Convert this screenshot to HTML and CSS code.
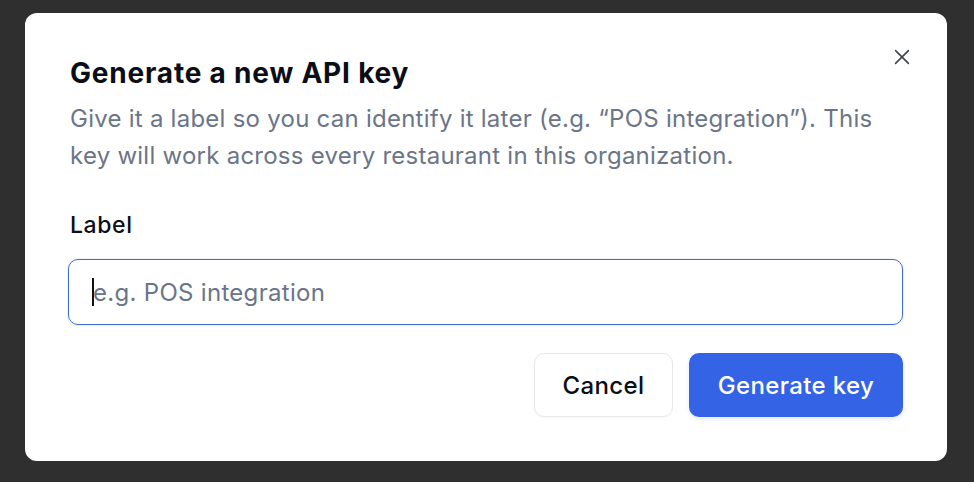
FILE: index.html
```html
<!DOCTYPE html>
<html lang="en">
<head>
<meta charset="utf-8">
<title>Generate a new API key</title>
<link rel="stylesheet" href="styles.css">
</head>
<body>
<div class="backdrop">
  <div class="dialog" role="dialog" aria-labelledby="dlg-title">
    <button class="close" aria-label="Close">
      <svg viewBox="0 0 24 24" width="22" height="22" fill="none" stroke="currentColor" stroke-width="1.7" stroke-linecap="round"><path d="M5 5L19 19M19 5L5 19"/></svg>
    </button>
    <h2 class="title" id="dlg-title">Generate a new API key</h2>
    <p class="desc">Give it a label so you can identify it later (e.g. “POS integration”). This key will work across every restaurant in this organization.</p>
    <label class="field-label" for="label">Label</label>
    <div class="input"><span class="caret"></span><span class="placeholder">e.g. POS integration</span></div>
    <div class="actions">
      <button class="btn btn-secondary">Cancel</button>
      <button class="btn btn-primary">Generate key</button>
    </div>
  </div>
</div>
</body>
</html>
```
FILE: styles.css
```css
* { box-sizing: border-box; }
html, body { margin: 0; height: 100%; }
body {
  background: #2f2f2f;
  font-family: Inter, "Noto Sans", sans-serif;
  -webkit-font-smoothing: antialiased;
}
.backdrop {
  padding: 13px 27px 21px 25px;
}
.dialog {
  position: relative;
  width: 922px;
  height: 448px;
  background: #ffffff;
  border-radius: 12px;
  padding: 43px 44px 0 45px;
  display: flex;
  flex-direction: column;
}
.close {
  position: absolute;
  top: 28px;
  right: 29px;
  width: 32px;
  height: 32px;
  padding: 0;
  border: 0;
  background: transparent;
  color: #3f434a;
  display: flex;
  align-items: center;
  justify-content: center;
}
.title {
  margin: 0;
  font-size: 28px;
  line-height: 34px;
  font-weight: 700;
  color: #0b0d17;
  letter-spacing: 0.8px;
}
.desc {
  margin: 10px 0 0;
  font-size: 24px;
  line-height: 37px;
  color: #6b7588;
  font-weight: 400;
  letter-spacing: 0.25px;
}
.field-label {
  margin-top: 37px;
  font-size: 23px;
  line-height: 28px;
  font-weight: 500;
  color: #0b0d17;
  letter-spacing: 0.6px;
}
.input {
  margin-top: 20px;
  margin-left: -2px;
  height: 66px;
  border: 1.5px solid #3f6cd6;
  border-radius: 10px;
  display: flex;
  align-items: center;
  padding-left: 23px;
  font-size: 24px;
  letter-spacing: 0.3px;
  box-shadow: 0 0 0 1px rgba(63,108,214,0.08);
}
.caret {
  width: 2px;
  height: 28px;
  background: #111;
  margin-right: -1px;
}
.placeholder {
  color: #6b7588;
}
.actions {
  margin-top: 28px;
  display: flex;
  justify-content: flex-end;
  gap: 16px;
}
.btn {
  height: 64px;
  border-radius: 10px;
  font-family: inherit;
  font-size: 24px;
  font-weight: 500;
  letter-spacing: 0.35px;
  padding: 0;
}
.btn-secondary {
  width: 139px;
  background: #fff;
  border: 1px solid #e6e8ec;
  color: #0b0d17;
  box-shadow: 0 1px 2px rgba(0,0,0,0.04);
}
.btn-primary {
  width: 214px;
  background: #3563e5;
  border: 0;
  color: #fff;
  box-shadow: 0 2px 4px rgba(53,99,229,0.15);
}
```
